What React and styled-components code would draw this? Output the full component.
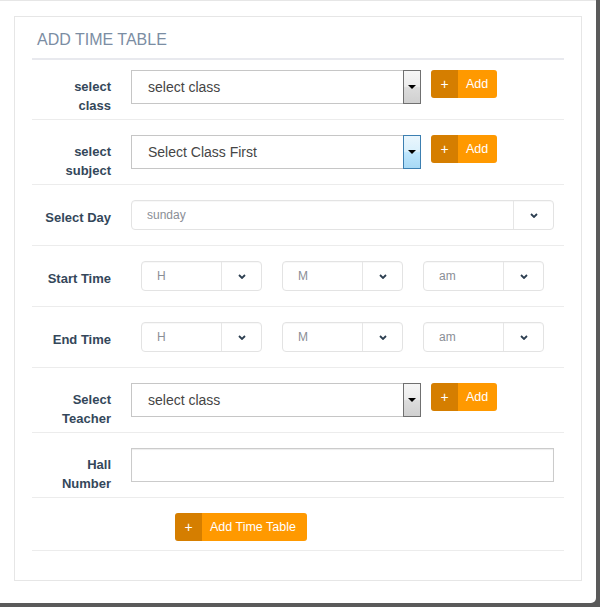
import React from 'react';
import styled, { createGlobalStyle, css } from 'styled-components';

const Global = createGlobalStyle`
  html, body {
    margin: 0;
    background: #5a5a5a;
  }
  * {
    box-sizing: border-box;
  }
`;

// white window, dark backdrop shows at right and bottom
const Window = styled.div`
  width: 596px;
  height: 603px;
  background: #fff;
  border-top: 1px solid #e6e6e6;
  border-bottom-right-radius: 5px;
  padding: 15px 14px 0;
  font-family: "Liberation Sans", Arial, sans-serif;
`;

const Panel = styled.div`
  border: 1px solid #e6e6e6;
  padding: 0 17px 29px;
`;

const Heading = styled.h3`
  margin: 0;
  padding: 13px 5px 9px;
  font-size: 16px;
  line-height: 19px;
  font-weight: normal;
  color: #7b8da3;
  border-bottom: 2px solid #e8e9ee;
`;

const Row = styled.div`
  display: flex;
  align-items: flex-start;
  padding-top: ${p => (p.$first ? 10 : 15)}px;
  border-bottom: 1px solid #ececec;
`;

const Label = styled.label`
  width: 70px;
  margin: 0 20px 0 9px;
  padding: ${p => p.$top}px 0 4px;
  text-align: right;
  font-size: 13px;
  font-weight: bold;
  line-height: 19px;
  color: #34475a;
`;

const Controls = styled.div`
  flex: 1;
  display: flex;
  align-items: flex-start;
  gap: ${p => p.$gap || 0}px;
  padding-left: ${p => p.$indent || 0}px;
  padding-bottom: ${p => p.$bottom ?? 15}px;
`;

// old-style native dropdown
const NativeSelect = styled.div`
  width: 290px;
  height: 34px;
  display: flex;
  align-items: center;
  border: 1px solid #c6c6c6;
  font-size: 14px;
  color: #454545;
`;

const NativeText = styled.span`
  flex: 1;
  padding-left: 16px;
`;

const NativeArrow = styled.span`
  width: 18px;
  align-self: stretch;
  margin: -1px -1px -1px 0;
  display: flex;
  align-items: center;
  justify-content: center;
  border: 1px solid #707070;
  background: linear-gradient(#f6f6f6 0%, #ececec 48%, #dcdcdc 52%, #d0d0d0 100%);
  ${p =>
    p.$active &&
    css`
      border-color: #3c7fb1;
      background: linear-gradient(#eaf6fd 0%, #d9f0fc 48%, #bee6fd 52%, #a7d9f5 100%);
    `}

  &::after {
    content: '';
    border-left: 4px solid transparent;
    border-right: 4px solid transparent;
    border-top: 4px solid #000;
  }
`;

const Button = styled.button`
  display: flex;
  height: 28px;
  padding: 0;
  margin-left: ${p => p.$offset || 0}px;
  border: 0;
  border-radius: 3px;
  overflow: hidden;
  font-family: inherit;
  font-size: 12.5px;
  color: #fff;
  cursor: pointer;
`;

const ButtonIcon = styled.span`
  width: 27px;
  display: flex;
  align-items: center;
  justify-content: center;
  background: #d57e00;
  font-size: 14px;
`;

const ButtonText = styled.span`
  display: flex;
  align-items: center;
  padding: 0 ${p => p.$right || 9}px 0 8px;
  background: #ff9900;
`;

// bootstrap-ish styled select
const FancySelect = styled.div`
  width: ${p => p.$width}px;
  height: 30px;
  display: flex;
  border: 1px solid #e3e3e3;
  border-radius: 4px;
  box-shadow: inset 0 1px 1px rgba(0, 0, 0, 0.03);
  font-size: 12px;
  color: #8a8e96;
`;

const FancyText = styled.span`
  flex: 1;
  display: flex;
  align-items: center;
  padding-left: 15px;
`;

const FancyArrow = styled.span`
  width: 40px;
  display: flex;
  align-items: center;
  justify-content: center;
  border-left: 1px solid #e6e6e6;
`;

const Input = styled.input`
  width: 423px;
  height: 34px;
  border: 1px solid #cbcbcb;
  box-shadow: inset 0 1px 1px rgba(0, 0, 0, 0.075);
  outline: none;
`;

const Chevron = () => (
  <svg width="8" height="5" viewBox="0 0 8 5">
    <polyline points="1,1 4,4 7,1" fill="none" stroke="#2c3e50" strokeWidth="1.8" />
  </svg>
);

const Dropdown = ({ value, width }) => (
  <FancySelect $width={width}>
    <FancyText>{value}</FancyText>
    <FancyArrow>
      <Chevron />
    </FancyArrow>
  </FancySelect>
);

const Native = ({ value, active }) => (
  <NativeSelect>
    <NativeText>{value}</NativeText>
    <NativeArrow $active={active} />
  </NativeSelect>
);

const AddButton = ({ children, offset, right }) => (
  <Button $offset={offset}>
    <ButtonIcon>+</ButtonIcon>
    <ButtonText $right={right}>{children}</ButtonText>
  </Button>
);

const TimeRow = ({ label }) => (
  <Row>
    <Label $top={8}>{label}</Label>
    <Controls $gap={20} $indent={10}>
      <Dropdown value="H" width={121} />
      <Dropdown value="M" width={121} />
      <Dropdown value="am" width={121} />
    </Controls>
  </Row>
);

export default function App() {
  return (
    <>
      <Global />
      <Window>
        <Panel>
          <Heading>ADD TIME TABLE</Heading>

          <Row $first>
            <Label $top={7}>select class</Label>
            <Controls>
              <Native value="select class" />
              <AddButton offset={10}>Add</AddButton>
            </Controls>
          </Row>

          <Row>
            <Label $top={7}>select subject</Label>
            <Controls>
              <Native value="Select Class First" active />
              <AddButton offset={10}>Add</AddButton>
            </Controls>
          </Row>

          <Row>
            <Label $top={8}>Select Day</Label>
            <Controls>
              <Dropdown value="sunday" width={423} />
            </Controls>
          </Row>

          <TimeRow label="Start Time" />
          <TimeRow label="End Time" />

          <Row>
            <Label $top={7}>Select Teacher</Label>
            <Controls>
              <Native value="select class" />
              <AddButton offset={10}>Add</AddButton>
            </Controls>
          </Row>

          <Row>
            <Label $top={7}>Hall Number</Label>
            <Controls>
              <Input />
            </Controls>
          </Row>

          <Row>
            <Label $top={7} />
            <Controls $bottom={9}>
              <AddButton offset={44} right={11}>Add Time Table</AddButton>
            </Controls>
          </Row>
        </Panel>
      </Window>
    </>
  );
}
